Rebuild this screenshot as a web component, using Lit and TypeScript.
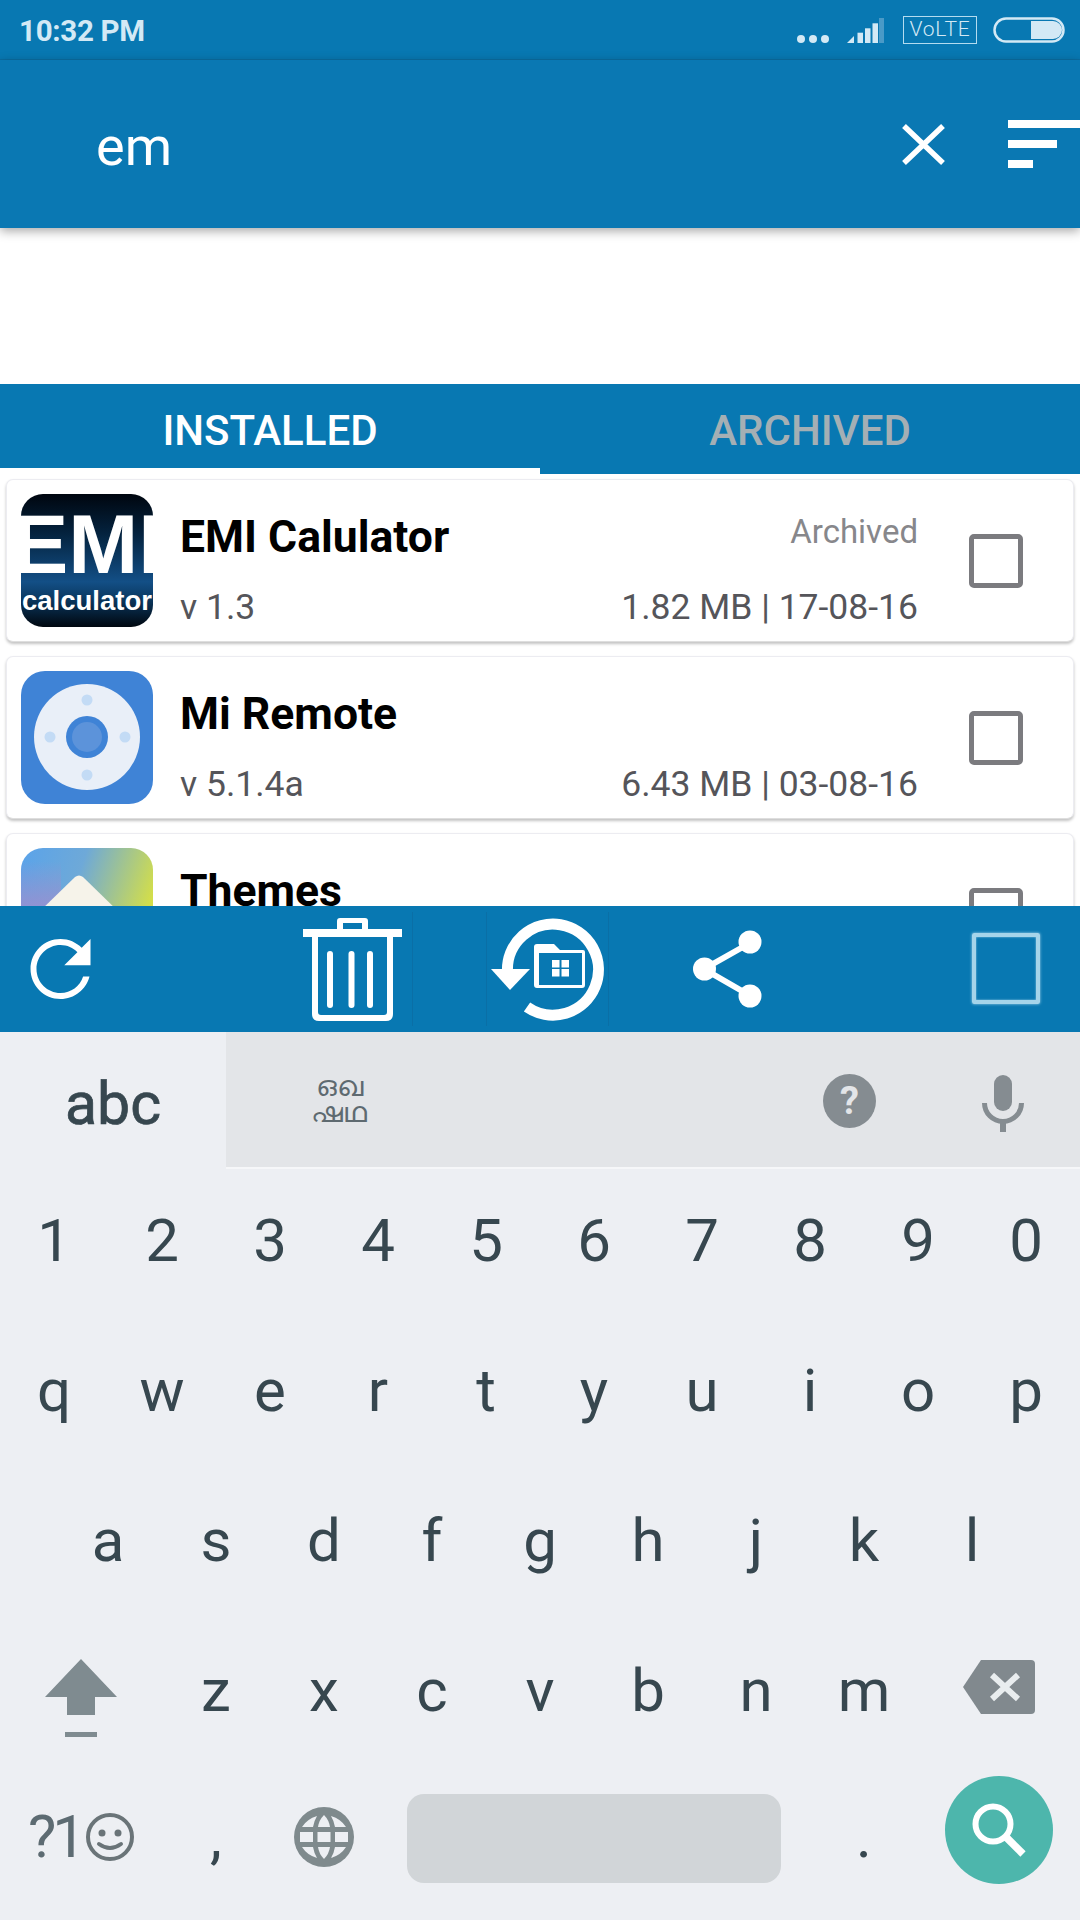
import { LitElement, html, css, svg } from 'lit';
import { customElement } from 'lit/decorators.js';

const APPS = [
  { id: 'emi', name: 'EMI Calulator', version: 'v 1.3', flag: 'Archived', meta: '1.82 MB | 17-08-16' },
  { id: 'remote', name: 'Mi Remote', version: 'v 5.1.4a', flag: '', meta: '6.43 MB | 03-08-16' },
  { id: 'themes', name: 'Themes', version: '', flag: '', meta: '' },
];

const ROW_DIGITS = '1234567890'.split('');
const ROW_TOP = 'qwertyuiop'.split('');
const ROW_MID = 'asdfghjkl'.split('');
const ROW_LOW = 'zxcvbnm'.split('');

function appIcon(id: string) {
  if (id === 'emi') {
    return svg`<svg class="app-icon" viewBox="0 0 132 133">
      <defs>
        <linearGradient id="emiBg" x1="0" y1="0" x2="0" y2="1">
          <stop offset="0" stop-color="#00060f" />
          <stop offset="0.3" stop-color="#04233f" />
          <stop offset="0.66" stop-color="#134f86" />
          <stop offset="0.78" stop-color="#0b3a63" />
          <stop offset="1" stop-color="#00070f" />
        </linearGradient>
        <clipPath id="emiClip"><rect width="132" height="133" rx="22" /></clipPath>
      </defs>
      <g clip-path="url(#emiClip)">
        <rect width="132" height="133" fill="url(#emiBg)" />
        <text x="66" y="79" text-anchor="middle" class="emi-big">EMI</text>
        <text x="66" y="116" text-anchor="middle" class="emi-small">calculator</text>
      </g>
    </svg>`;
  }
  if (id === 'remote') {
    return svg`<svg class="app-icon" viewBox="0 0 132 133">
      <rect width="132" height="133" rx="24" fill="#3f83d6" />
      <circle cx="66" cy="66" r="53" fill="#e9eff8" />
      <circle cx="66" cy="66" r="21" fill="#3f83d6" />
      <circle cx="66" cy="66" r="15" fill="#5c93da" />
      <circle cx="66" cy="29" r="5.5" fill="#c3dbf5" />
      <circle cx="66" cy="104" r="5.5" fill="#c3dbf5" />
      <circle cx="29" cy="66" r="5.5" fill="#c3dbf5" />
      <circle cx="104" cy="66" r="5.5" fill="#c3dbf5" />
    </svg>`;
  }
  return svg`<svg class="app-icon" viewBox="0 0 132 133">
    <defs>
      <linearGradient id="thBg" x1="0" y1="0" x2="1" y2="0.35">
        <stop offset="0" stop-color="#5aa3ea" />
        <stop offset="0.45" stop-color="#6ea9d8" />
        <stop offset="1" stop-color="#d3de4a" />
      </linearGradient>
      <linearGradient id="thLow" x1="0" y1="0" x2="0" y2="1">
        <stop offset="0.1" stop-color="#9a8fd0" stop-opacity="0" />
        <stop offset="0.42" stop-color="#9a8fd0" stop-opacity="0.8" />
      </linearGradient>
      <clipPath id="thClip"><rect width="132" height="133" rx="22" /></clipPath>
    </defs>
    <g clip-path="url(#thClip)">
      <rect width="132" height="133" fill="url(#thBg)" />
      <rect width="40" height="133" fill="url(#thLow)" />
      <path d="M54 29q4-3 8 0L100 66H16Z" fill="#f6f3ea" />
    </g>
  </svg>`;
}

@customElement('app-root')
export class AppRoot extends LitElement {
  static styles = css`
    :host {
      display: flex;
      flex-direction: column;
      width: 1080px;
      height: 1920px;
      overflow: hidden;
      background: #fff;
      font-family: Roboto, 'Noto Sans', sans-serif;
    }
    svg {
      display: block;
      flex: none;
    }

    .status {
      display: flex;
      align-items: flex-start;
      height: 60px;
      box-sizing: border-box;
      padding: 0 15px 0 19px;
      background: #0878b2;
      border-bottom: 1px solid #0a6ea3;
      color: #d3e9f5;
    }
    .time {
      font-size: 29.5px;
      font-weight: 700;
      line-height: 62px;
      letter-spacing: -0.3px;
      margin-right: auto;
    }
    .dots {
      margin: 35px 18px 0 0;
    }
    .signal {
      margin: 18px 19px 0 0;
    }
    .volte {
      width: 74px;
      height: 28px;
      box-sizing: border-box;
      margin: 16px 16px 0 0;
      border: 1.5px solid #b4dcf0;
      font-size: 21px;
      font-weight: 300;
      line-height: 25px;
      letter-spacing: 0.8px;
      text-align: center;
    }
    .battery {
      margin-top: 17px;
    }

    .toolbar {
      position: relative;
      z-index: 2;
      display: flex;
      align-items: center;
      height: 168px;
      padding-left: 96px;
      background: #0a78b3;
      box-shadow: 0 3px 10px rgba(0, 0, 0, 0.35);
      color: #fff;
    }
    .query {
      flex: 1;
      padding-top: 6px;
      font-size: 54px;
      line-height: 60px;
    }
    .sort {
      margin-left: 63px;
    }

    .spacer {
      height: 156px;
    }

    .tabs {
      display: flex;
      height: 90px;
      background: #0878b2;
    }
    .tab {
      flex: 1;
      box-sizing: border-box;
      padding-top: 4px;
      font-size: 42px;
      font-weight: 500;
      line-height: 86px;
      text-align: center;
      color: #a4afb4;
    }
    .tab.active {
      color: #fff;
      box-shadow: inset 0 -6px 0 #fff;
    }

    .list {
      flex: 1;
      min-height: 0;
      overflow: hidden;
      box-sizing: border-box;
      padding: 5px 6px 0;
      background: #fff;
    }
    .card {
      display: flex;
      align-items: center;
      box-sizing: border-box;
      height: 163px;
      margin-bottom: 14px;
      padding-left: 14px;
      background: #fff;
      border: 1px solid #ececf1;
      border-bottom-color: #dedede;
      border-radius: 7px;
      box-shadow: 0 2px 3px rgba(0, 0, 0, 0.24);
    }
    .app-icon {
      width: 132px;
      height: 133px;
    }
    .emi-big {
      font-family: 'Liberation Sans', sans-serif;
      font-size: 84px;
      font-weight: 700;
      fill: #fff;
    }
    .emi-small {
      font-family: 'Liberation Sans', sans-serif;
      font-size: 27.5px;
      font-weight: 700;
      fill: #fff;
    }
    .info {
      align-self: stretch;
      box-sizing: border-box;
      width: 738px;
      margin-left: 27px;
      padding-top: 31px;
    }
    .line {
      display: flex;
      justify-content: space-between;
      align-items: flex-start;
    }
    .name {
      font-size: 44.5px;
      font-weight: 700;
      line-height: 52px;
      color: #000;
    }
    .flag {
      font-size: 33px;
      line-height: 42px;
      color: #87878b;
    }
    .line.sub {
      margin-top: 24px;
      font-size: 35.5px;
      line-height: 40px;
      color: #55555a;
    }
    .check {
      flex: none;
      width: 54px;
      height: 54px;
      box-sizing: border-box;
      margin-left: 51px;
      border: 5px solid #7b7b7f;
      border-radius: 5px;
    }

    .actions {
      position: relative;
      z-index: 1;
      display: flex;
      align-items: center;
      height: 126px;
      background: #0878b2;
    }
    .act-refresh {
      margin-left: 30px;
    }
    .act-trash {
      margin-left: 212px;
    }
    .sep {
      flex: none;
      width: 1px;
      height: 114px;
      background: #0a6fa6;
    }
    .sep.first {
      margin-left: 10px;
      margin-right: 73px;
    }
    .act-restore {
      width: 121px;
    }
    .act-share {
      margin-left: 84px;
    }
    .act-box {
      flex: none;
      width: 68px;
      height: 71px;
      box-sizing: border-box;
      margin-left: 210px;
      margin-top: -2px;
      border: 4px solid #a5d4ea;
      border-radius: 2px;
      box-shadow: 0 0 3px #a5d4ea, inset 0 0 2px #a5d4ea;
    }

    .keyboard {
      flex: none;
      height: 888px;
      background: #edeff3;
      color: #37474f;
    }
    .strip {
      display: flex;
      height: 135px;
    }
    .abc {
      width: 226px;
      padding-top: 8px;
      box-sizing: border-box;
      font-size: 59px;
      -webkit-text-stroke: 0.7px #37474f;
      line-height: 127px;
      text-align: center;
    }
    .strip-rest {
      flex: 1;
      display: flex;
      align-items: center;
      background: #e3e5e8;
      box-shadow: 0 2px 0 #f6f7f9;
    }
    .script {
      width: 226px;
      margin-top: -3px;
      font-family: 'Noto Sans', 'DejaVu Sans', sans-serif;
      font-size: 29px;
      font-weight: 500;
      line-height: 26px;
      text-align: center;
      color: #5e6a70;
    }
    .help {
      flex: none;
      width: 53px;
      height: 54px;
      margin-left: auto;
      margin-top: 2px;
      border-radius: 50%;
      background: #858c91;
      color: #e3e5e8;
      font-size: 38px;
      font-weight: 700;
      line-height: 54px;
      text-align: center;
    }
    .mic {
      margin: 8px 56px 0 106px;
    }
    .row {
      display: grid;
      grid-template-columns: repeat(10, 108px);
      height: 150px;
      font-size: 60px;
      line-height: 148px;
      text-align: center;
    }
    .row.mid {
      padding-left: 54px;
    }
    .row.low {
      grid-template-columns: 162px repeat(7, 108px) 162px;
    }
    .cell {
      display: flex;
      justify-content: center;
    }
    .shift {
      padding-top: 42px;
    }
    .back {
      padding-top: 43px;
    }
    .bottom {
      display: grid;
      grid-template-columns: 162px 108px 108px 432px 108px 162px;
      align-items: center;
      height: 140px;
    }
    .sym {
      display: flex;
      justify-content: center;
      align-items: center;
      gap: 4px;
      font-size: 60px;
      line-height: 62px;
      letter-spacing: -4px;
      color: #5d6b72;
    }
    .punct {
      font-size: 60px;
      line-height: 62px;
      text-align: center;
    }
    .globe {
      justify-self: center;
    }
    .space {
      height: 89px;
      margin: 3px 29px 0;
      border-radius: 17px;
      background: #d1d5d8;
    }
    .fab {
      justify-self: center;
      display: flex;
      align-items: center;
      justify-content: center;
      width: 108px;
      height: 108px;
      margin-bottom: 14px;
      border-radius: 50%;
      background: #4db6ac;
    }
  `;

  private statusBar() {
    return html`<div class="status">
      <div class="time">10:32 PM</div>
      <svg class="dots" width="32" height="8" viewBox="0 0 32 8" fill="#d3e9f5">
        <circle cx="4" cy="4" r="4" /><circle cx="16" cy="4" r="4" /><circle cx="28" cy="4" r="4" />
      </svg>
      <svg class="signal" width="37" height="25" viewBox="0 0 37 25" fill="#d3e9f5">
        <path d="M0 25 7 18V25Z" />
        <rect x="10.5" y="14.7" width="5.5" height="10.3" />
        <rect x="18" y="10.3" width="5.5" height="14.7" />
        <rect x="25.5" y="5.3" width="5.5" height="19.7" />
        <rect x="32" y="0" width="5" height="25" fill="#4a9ac7" />
      </svg>
      <div class="volte">VoLTE</div>
      <svg class="battery" width="72" height="26" viewBox="0 0 72 26">
        <rect x="1.5" y="1.5" width="69" height="23" rx="11.5" fill="none" stroke="#d3e9f5" stroke-width="2.5" />
        <path d="M38 4h22a9 9 0 0 1 0 18H38Z" fill="#d3e9f5" />
      </svg>
    </div>`;
  }

  private toolbar() {
    return html`<div class="toolbar">
      <div class="query">em</div>
      <svg width="43" height="41" viewBox="0 0 43 41" stroke="#fff" stroke-width="5.5">
        <path d="M2 2 41 39M41 2 2 39" />
      </svg>
      <svg class="sort" width="72" height="48" viewBox="0 0 72 48" fill="#fff">
        <rect width="72" height="8" />
        <rect y="20" width="49" height="8" />
        <rect y="40" width="25" height="8" />
      </svg>
    </div>`;
  }

  private appCard(app: (typeof APPS)[number]) {
    return html`<div class="card">
      ${appIcon(app.id)}
      <div class="info">
        <div class="line">
          <span class="name">${app.name}</span>
          <span class="flag">${app.flag}</span>
        </div>
        <div class="line sub">
          <span>${app.version}</span>
          <span>${app.meta}</span>
        </div>
      </div>
      <div class="check"></div>
    </div>`;
  }

  private actionBar() {
    return html`<div class="actions">
      <svg class="act-refresh" width="61" height="60" viewBox="4 4 16 16" fill="#fff">
        <path d="M17.65 6.35C16.2 4.9 14.21 4 12 4c-4.42 0-7.99 3.58-7.99 8s3.57 8 7.99 8c3.73 0 6.84-2.55 7.73-6h-1.7c-.82 2.6-3.24 4.4-6.03 4.4-3.53 0-6.4-2.87-6.4-6.4S8.47 5.6 12 5.6c1.77 0 3.35.74 4.5 1.9L13 11h7V4l-2.35 2.35z" />
      </svg>
      <svg class="act-trash" width="99" height="103" viewBox="0 0 99 103" fill="#fff">
        <path d="M34 11V3q0-3 3-3h25q3 0 3 3v8h-6V5H40v6Z" />
        <rect y="11" width="99" height="8" />
        <path d="M9 17h6v77q0 3 3 3h63q3 0 3-3V17h6v79q0 7-7 7H16q-7 0-7-7Z" />
        <rect x="24" y="33" width="6" height="57" rx="3" />
        <rect x="45.5" y="33" width="6" height="57" rx="3" />
        <rect x="64" y="33" width="6" height="57" rx="3" />
      </svg>
      <div class="sep first"></div>
      <div class="sep"></div>
      <svg class="act-restore" width="121" height="126" viewBox="0 0 121 126" fill="#fff">
        <path d="M20.5 66A45.5 45.5 0 1 1 40 101" fill="none" stroke="#fff" stroke-width="11" />
        <path d="M4 63H43L23 84Z" />
        <path d="M47 41q0-3 3-3h17l6 6h23q2 0 2 2v33q0 3-3 3H50q-3 0-3-3Z" />
        <rect x="52" y="47" width="43" height="32" fill="#0878b2" />
        <rect x="65" y="54" width="7.5" height="7.5" />
        <rect x="74.5" y="54" width="7.5" height="7.5" />
        <rect x="65" y="63" width="7.5" height="7.5" />
        <rect x="74.5" y="63" width="7.5" height="7.5" />
      </svg>
      <div class="sep"></div>
      <svg class="act-share" width="69" height="78" viewBox="0 0 69 78" fill="#fff" stroke="#fff">
        <path d="M57 13 11 39 56 65" fill="none" stroke-width="6" />
        <circle cx="57" cy="12" r="11.5" stroke="none" />
        <circle cx="11.5" cy="39" r="11.5" stroke="none" />
        <circle cx="57" cy="66" r="11.5" stroke="none" />
      </svg>
      <div class="act-box"></div>
    </div>`;
  }

  private keyboard() {
    return html`<div class="keyboard">
      <div class="strip">
        <div class="abc">abc</div>
        <div class="strip-rest">
          <div class="script">ഒഖ<br />ഷഥ</div>
          <div class="help">?</div>
          <svg class="mic" width="42" height="57" viewBox="0 0 42 57" fill="#858c91">
            <rect x="12" width="18" height="36" rx="9" />
            <path d="M2.5 28a18.5 18.5 0 0 0 37 0" fill="none" stroke="#858c91" stroke-width="5" />
            <rect x="18" y="46" width="6" height="11" />
          </svg>
        </div>
      </div>
      <div class="row">${ROW_DIGITS.map((k) => html`<span>${k}</span>`)}</div>
      <div class="row">${ROW_TOP.map((k) => html`<span>${k}</span>`)}</div>
      <div class="row mid">${ROW_MID.map((k) => html`<span>${k}</span>`)}</div>
      <div class="row low">
        <div class="cell shift">
          <svg width="72" height="78" viewBox="0 0 72 78" fill="#7f8b90">
            <path d="M36 0 72 38H50V56H22V38H0Z" />
            <rect x="20" y="73" width="32" height="5" />
          </svg>
        </div>
        ${ROW_LOW.map((k) => html`<span>${k}</span>`)}
        <div class="cell back">
          <svg width="72" height="54" viewBox="0 0 72 54">
            <path d="M18 0H68q4 0 4 4V50q0 4-4 4H18L0 27Z" fill="#81898e" />
            <path d="M29 15 55 39M55 15 29 39" stroke="#e9edef" stroke-width="6" />
          </svg>
        </div>
      </div>
      <div class="bottom">
        <div class="sym">
          <span>?1</span>
          <svg width="48" height="48" viewBox="0 0 48 48" fill="none" stroke="#6a7478" stroke-width="4">
            <circle cx="24" cy="24" r="22" />
            <circle cx="16" cy="20" r="3.5" fill="#6a7478" stroke="none" />
            <circle cx="32" cy="20" r="3.5" fill="#6a7478" stroke="none" />
            <path d="M13 31q11 8 22 0" stroke-linecap="round" />
          </svg>
        </div>
        <div class="punct">,</div>
        <svg class="globe" width="60" height="62" viewBox="0 0 60 62">
          <circle cx="30" cy="31" r="30" fill="#7f8a8d" />
          <g fill="#edeff3">
            <path d="M30 9Q25 14 24 21H36Q35 14 30 9Z" />
            <path d="M8 21H19Q20 15 23 10 13 13 8 21Z" />
            <path d="M52 21H41Q40 15 37 10 47 13 52 21Z" />
            <rect x="6" y="26" width="13" height="10" />
            <rect x="23.5" y="26" width="13" height="10" />
            <rect x="41" y="26" width="13" height="10" />
            <path d="M30 53Q25 48 24 41H36Q35 48 30 53Z" />
            <path d="M8 41H19Q20 47 23 52 13 49 8 41Z" />
            <path d="M52 41H41Q40 47 37 52 47 49 52 41Z" />
          </g>
        </svg>
        <div class="space"></div>
        <div class="punct">.</div>
        <div class="fab">
          <svg width="54" height="54" viewBox="0 0 54 54" fill="none" stroke="#fff">
            <circle cx="21" cy="21" r="17.5" stroke-width="6" />
            <path d="M33 33 51 51" stroke-width="7.5" />
          </svg>
        </div>
      </div>
    </div>`;
  }

  render() {
    return html`
      ${this.statusBar()} ${this.toolbar()}
      <div class="spacer"></div>
      <div class="tabs">
        <div class="tab active">INSTALLED</div>
        <div class="tab">ARCHIVED</div>
      </div>
      <div class="list">${APPS.map((a) => this.appCard(a))}</div>
      ${this.actionBar()} ${this.keyboard()}
    `;
  }
}
